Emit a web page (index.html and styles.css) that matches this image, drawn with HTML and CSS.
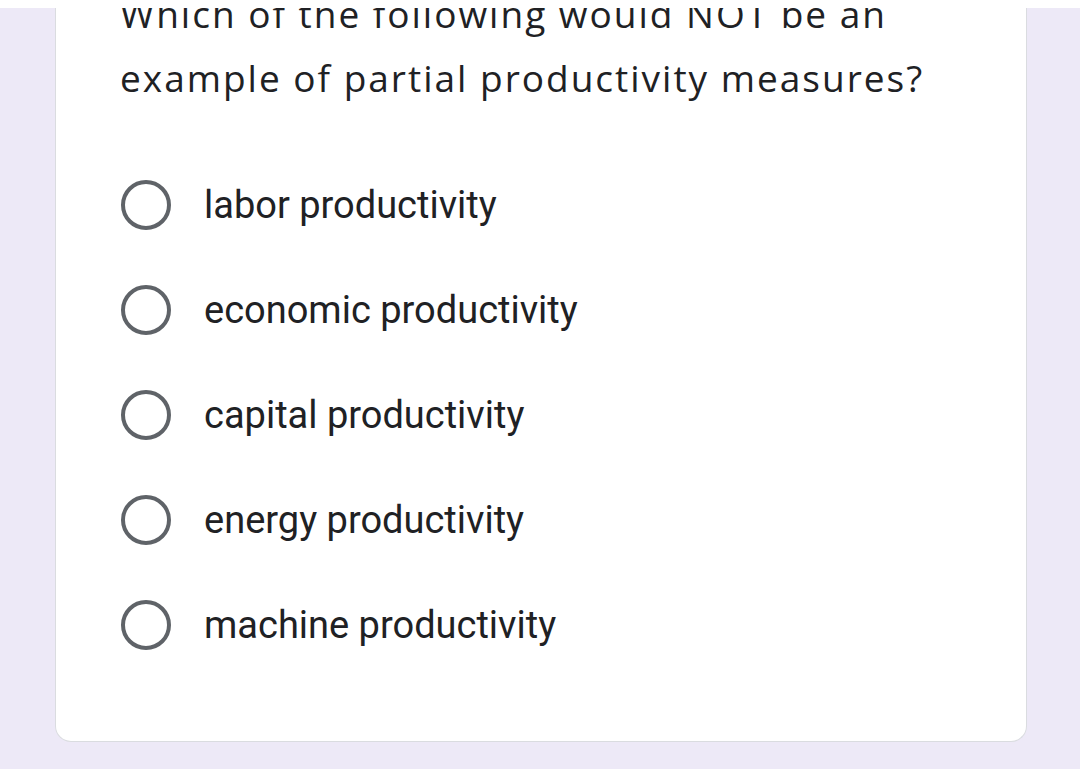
FILE: index.html
```html
<!DOCTYPE html>
<html lang="en">
<head>
<meta charset="utf-8">
<title>Question</title>
<link rel="stylesheet" href="styles.css">
</head>
<body>
<div class="top-strip"></div>
<main class="card">
  <div class="question">Which of the following would NOT be an example of partial productivity measures?</div>
  <div class="options" role="radiogroup">
    <div class="option"><span class="radio"></span><span class="label">labor productivity</span></div>
    <div class="option"><span class="radio"></span><span class="label">economic productivity</span></div>
    <div class="option"><span class="radio"></span><span class="label">capital productivity</span></div>
    <div class="option"><span class="radio"></span><span class="label">energy productivity</span></div>
    <div class="option"><span class="radio"></span><span class="label">machine productivity</span></div>
  </div>
</main>
</body>
</html>
```
FILE: styles.css
```css
html, body {
  margin: 0;
  padding: 0;
}
body {
  height: 769px;
  overflow: hidden;
  background: #ede9f7;
  padding-top: 8px;
  box-sizing: border-box;
}
.top-strip {
  position: fixed;
  top: 0;
  left: 0;
  right: 0;
  height: 8px;
  background: #ffffff;
  z-index: 2;
}
.card {
  margin-left: 55px;
  width: 972px;
  box-sizing: border-box;
  background: #ffffff;
  border: 1px solid #dadce0;
  border-top: none;
  border-radius: 0 0 16px 16px;
  padding: 0 40px 64px 64px;
}
.question {
  margin-top: -26px;
  font-family: "Open Sans", sans-serif;
  font-size: 37px;
  letter-spacing: 2px;
  line-height: 64px;
  color: #202124;
  max-width: 840px;
}
.options {
  margin-top: 42px;
  display: flex;
  flex-direction: column;
}
.option {
  height: 105px;
  display: flex;
  align-items: center;
  gap: 33px;
}
.radio {
  width: 50px;
  height: 50px;
  box-sizing: border-box;
  border: 4.5px solid #5f6368;
  border-radius: 50%;
  margin-left: 1px;
  flex: none;
}
.label {
  font-family: Roboto, sans-serif;
  font-size: 38px;
  color: #202124;
}
```
